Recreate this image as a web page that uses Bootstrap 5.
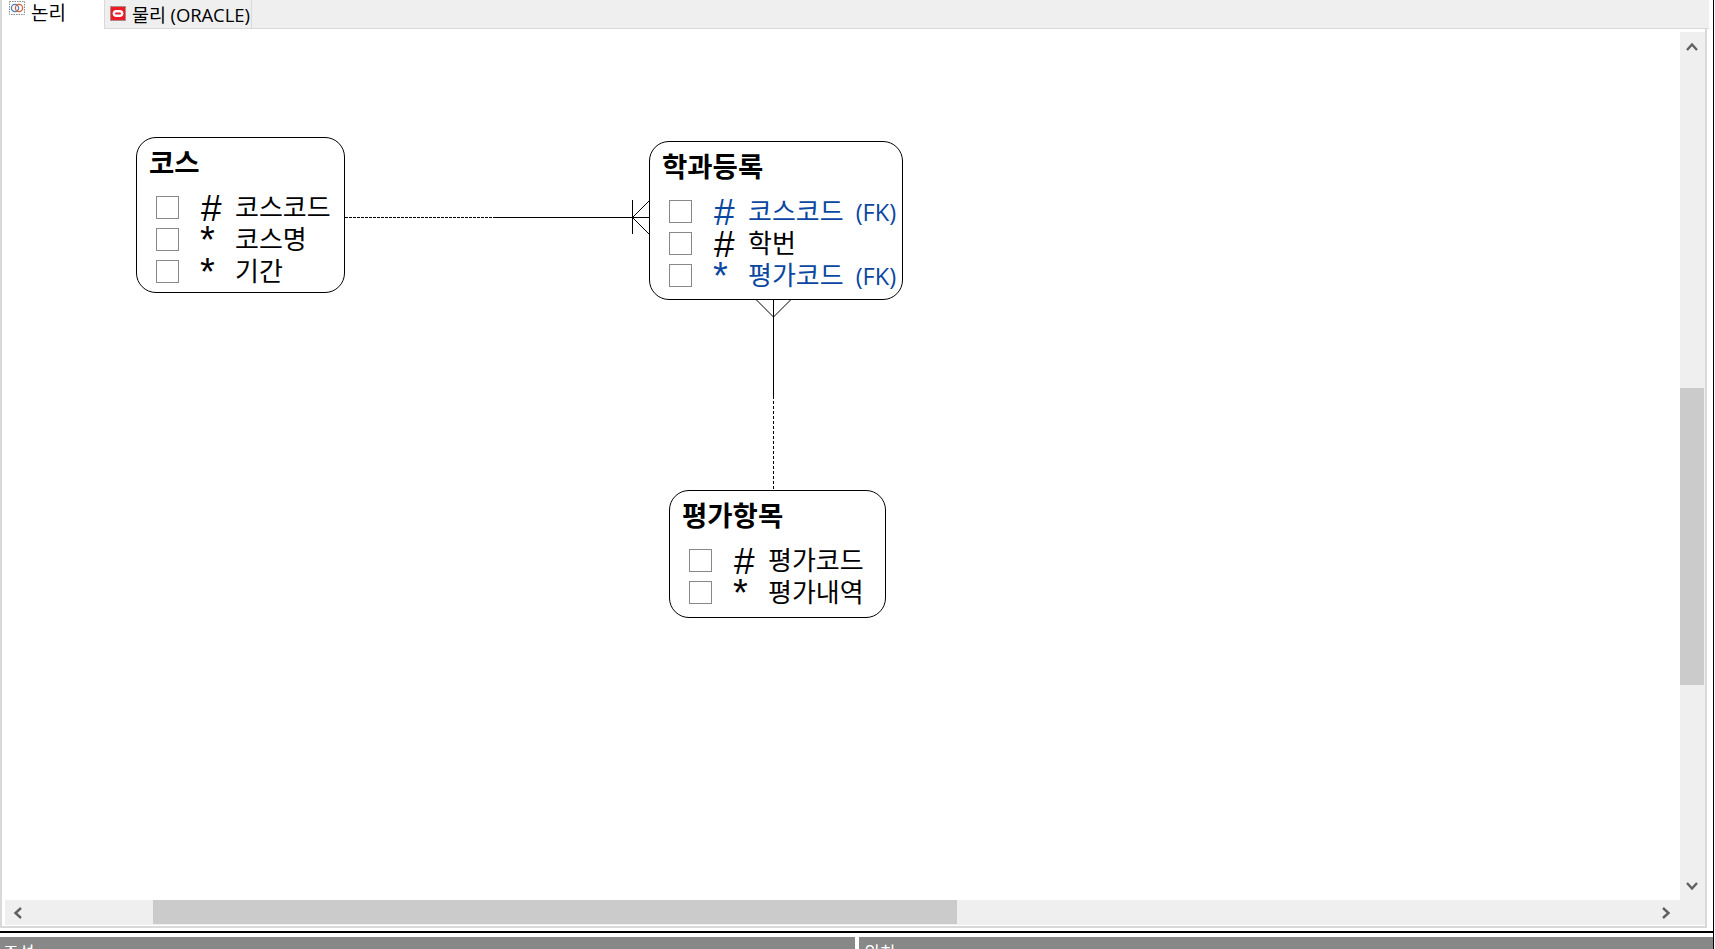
<!DOCTYPE html>
<html lang="ko"><head><meta charset="utf-8">
<title>ERD</title>
<link href="https://cdn.jsdelivr.net/npm/bootstrap@5.3.0/dist/css/bootstrap.min.css" rel="stylesheet">
<style>
html,body{height:100%;margin:0;overflow:hidden;background:#fff;font-family:"Open Sans","Noto Sans CJK KR",sans-serif;}
.app-shell{width:1713.5px;height:949px;border-right:1.5px solid #000;box-sizing:border-box;}
.top-area{height:933px;border-bottom:2px solid #000;box-sizing:border-box;padding-right:4px;position:relative;}
.tab-strip{height:29px;background:#efefef;border-bottom:1px solid #d9d9d9;}
.tab-item{height:29px;font-size:19px;color:#000;line-height:26px;box-sizing:border-box;display:flex;gap:6px;}
.tab-on{width:104px;background:#fff;padding-left:7px;border-left:2px solid #d9d9d9;height:29px;}
.tab-off{width:148px;padding-left:5px;padding-top:2px;border-left:1px solid #d9d9d9;border-right:1px solid #d9d9d9;font-size:18.5px;letter-spacing:-.1px;}
.frame-box{height:899px;margin-right:2px;border-left:2px solid #d9d9d9;border-right:2px solid #d9d9d9;border-bottom:2px solid #d9d9d9;box-sizing:border-box;padding-left:3px;}
.canvas-wrap{height:871px;margin-left:-3px;position:relative;}
.vbar{width:25px;background:#efefef;margin-top:3px;position:relative;flex:none;}
.hbar{height:25px;background:#efefef;position:relative;}
.vthumb{position:absolute;left:0;width:24px;top:356px;height:297px;background:#cbcbcb;}
.hthumb{position:absolute;left:148px;width:804px;top:0;height:24px;background:#cbcbcb;}
.sb-arrow{position:absolute;display:block;}
.er-lines{position:absolute;left:0;top:0;}
.er-node{position:absolute;background:#fff;border:1px solid #000;border-radius:20px;box-sizing:border-box;color:#000;}
.er-title{font-weight:700;font-size:27.5px;line-height:34px;height:34px;padding-left:12px;margin-top:8px;white-space:nowrap;}
.er-rows{margin-top:16px;padding-left:19px;}
.er-row{height:32px;display:flex;white-space:nowrap;align-items:flex-start;}
.er-check{width:23px;height:23px;border:1.3px solid #888;flex:none;background:#fff;box-sizing:border-box;}
.er-mark{width:34px;margin-left:22px;flex:none;font-family:"Liberation Sans",sans-serif;font-size:37px;line-height:25px;height:25px;}
.er-star{font-size:38px;line-height:25px;margin-left:21px;width:35px;}
.er-label{font-size:26px;line-height:23px;}
.er-fk{font-size:23.5px;line-height:25px;margin-left:12px;}
.er-link{color:#0a47a1;}
.foot-panels{height:16px;margin-top:4px;overflow:hidden;gap:4px;}
.foot-cell{background:#888;color:#fff;font-size:17px;line-height:24px;padding-left:3px;padding-top:4px;height:16px;overflow:hidden;}
.foot-left{width:855px;flex:none;}
.foot-right{flex:1;padding-left:5px;}
</style></head>
<body>
<div class="app-shell">
 <div class="top-area">
  <div class="tab-strip d-flex">
   <div class="tab-item tab-on">
    <svg width="16" height="16" viewBox="0 0 16 16"><rect x=".5" y="1.5" width="15" height="13" fill="#fff" stroke="#888" stroke-dasharray="1.5 1"/><circle cx="6" cy="8" r="3.6" fill="none" stroke="#4a7fc0" stroke-width="1.3"/><circle cx="10" cy="8" r="3.6" fill="none" stroke="#d8623a" stroke-width="1.3"/></svg>
    <span>논리</span>
   </div>
   <div class="tab-item tab-off">
    <svg class="mt-1" width="16" height="16" viewBox="0 0 16 16"><rect x=".5" y=".5" width="15" height="14" fill="#ec1c24" stroke="#888" stroke-dasharray="1.5 1"/><rect x="3" y="4.5" width="10" height="6" rx="3" fill="#fff" stroke="#fff"/><rect x="5" y="6.5" width="6" height="2" rx="1" fill="#ec1c24"/></svg>
    <span>물리 (ORACLE)</span>
   </div>
  </div>
  <div class="frame-box">
   <div class="d-flex canvas-wrap">
    <div class="flex-grow-1 position-relative">
     <svg class="er-lines" width="1677" height="871" viewBox="0 0 1677 871" fill="none" stroke="#000" stroke-width="1" shape-rendering="crispEdges">
      <g transform="translate(-2 -29)">
       <path d="M345 217.5H495" stroke-dasharray="3 1"/>
       <path d="M495 217.5H650"/>
       <path d="M632.5 200V234"/>
       <path d="M773.5 300V396"/>
       <path d="M773.5 396V490" stroke-dasharray="3 2"/>
       <g shape-rendering="auto">
        <path d="M632.5 217.5L650 200M632.5 217.5L650 235"/>
        <path d="M773.5 317L756 299.5M773.5 317L791 299.5"/>
       </g>
      </g>
     </svg>
     <div class="er-node" style="left:134px;top:108px;width:209px;height:156px">
      <div class="er-title">코스</div>
      <div class="er-rows">
       <div class="er-row"><span class="er-check"></span><span class="er-mark">#</span><span class="er-label">코스코드</span></div>
       <div class="er-row"><span class="er-check"></span><span class="er-mark er-star">*</span><span class="er-label">코스명</span></div>
       <div class="er-row"><span class="er-check"></span><span class="er-mark er-star">*</span><span class="er-label">기간</span></div>
      </div>
     </div>
     <div class="er-node" style="left:647px;top:112px;width:254px;height:159px">
      <div class="er-title">학과등록</div>
      <div class="er-rows">
       <div class="er-row er-link"><span class="er-check"></span><span class="er-mark">#</span><span class="er-label">코스코드</span><span class="er-fk">(FK)</span></div>
       <div class="er-row"><span class="er-check"></span><span class="er-mark">#</span><span class="er-label">학번</span></div>
       <div class="er-row er-link"><span class="er-check"></span><span class="er-mark er-star">*</span><span class="er-label">평가코드</span><span class="er-fk">(FK)</span></div>
      </div>
     </div>
     <div class="er-node" style="left:667px;top:461px;width:217px;height:128px">
      <div class="er-title">평가항목</div>
      <div class="er-rows">
       <div class="er-row"><span class="er-check"></span><span class="er-mark">#</span><span class="er-label">평가코드</span></div>
       <div class="er-row"><span class="er-check"></span><span class="er-mark er-star">*</span><span class="er-label">평가내역</span></div>
      </div>
     </div>
    </div>
    <div class="vbar">
     <svg class="sb-arrow" style="left:6px;top:10px" width="12" height="9" viewBox="0 0 12 9"><path d="M1 8L6 2.5L11 8" fill="none" stroke="#606060" stroke-width="2.4"/></svg>
     <div class="vthumb"></div>
     <svg class="sb-arrow" style="left:6px;bottom:9px" width="12" height="9" viewBox="0 0 12 9"><path d="M1 1L6 6.5L11 1" fill="none" stroke="#606060" stroke-width="2.4"/></svg>
    </div>
   </div>
   <div class="hbar">
    <svg class="sb-arrow" style="left:8px;top:7px" width="10" height="12" viewBox="0 0 10 12"><path d="M8 1L2.5 6L8 11" fill="none" stroke="#606060" stroke-width="2.4"/></svg>
    <div class="hthumb"></div>
    <svg class="sb-arrow" style="right:34px;top:7px" width="10" height="12" viewBox="0 0 10 12"><path d="M2 1L7.5 6L2 11" fill="none" stroke="#606060" stroke-width="2.4"/></svg>
   </div>
  </div>
 </div>
 <div class="d-flex foot-panels">
  <div class="foot-cell foot-left">주석</div>
  <div class="foot-cell foot-right">위치</div>
 </div>
</div>
</body></html>
